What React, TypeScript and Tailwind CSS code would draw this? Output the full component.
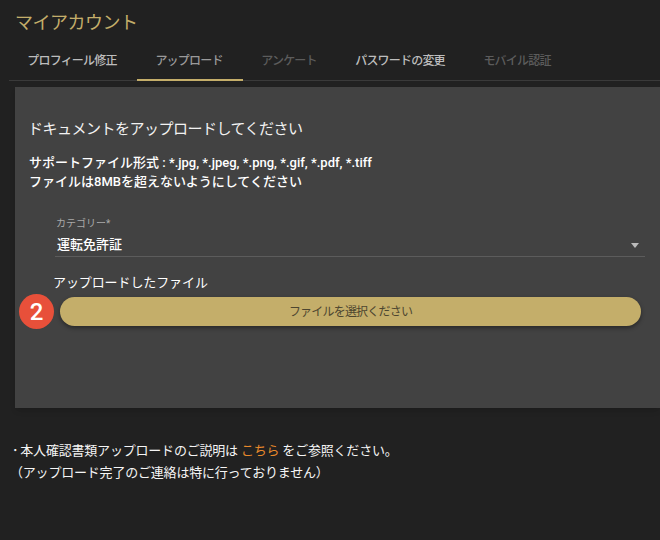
const jp = "font-['Roboto','Noto_Sans_CJK_JP',sans-serif]";

const tabs = [
  { label: "プロフィール修正", className: "w-[128px] text-[#bdbdbd] border-transparent" },
  { label: "アップロード", className: "w-[106px] text-[#9a9a9a] border-[#c4ae6a]" },
  { label: "アンケート", className: "w-[94px] text-[#5c5c5c] border-transparent" },
  { label: "パスワードの変更", className: "w-[128px] text-[#bdbdbd] border-transparent" },
  { label: "モバイル認証", className: "w-[106px] text-[#5c5c5c] border-transparent" },
];

export default function App() {
  return (
    <div className={`${jp} h-[540px] w-[660px] overflow-hidden bg-[#212121] text-white`}>
      <h1 className="pl-[15px] pt-[10px] text-[18px] leading-[25px] tracking-[-0.5px] text-[#c4ae6a]">マイアカウント</h1>

      <div className="ml-[9px] mt-[5px] flex h-[41px] border-b border-[#3a3a3a]">
        {tabs.map((t) => (
          <div key={t.label} className={`${t.className} -mb-px flex h-[41px] items-center justify-center border-b-2 pr-[2px] pt-[2px] text-[12px] font-medium tracking-[-0.8px]`}>
            {t.label}
          </div>
        ))}
      </div>

      <div className="ml-[15px] mt-[6px] h-[321px] bg-[#424242] pl-[14px] pt-[31px] shadow-md">
        <h2 className="-ml-px text-[15px] leading-[22px] tracking-[-0.5px] text-[#f2f2f2]">ドキュメントをアップロードしてください</h2>
        <div className="mt-[13px] text-[13px] font-medium leading-[19px]">
          <p>サポートファイル形式 : *.jpg, *.jpeg, *.png, *.gif, *.pdf, *.tiff</p>
          <p>ファイルは8MBを超えないようにしてください</p>
        </div>

        <div className="ml-[26px] mr-[15px] mt-[26px] border-b border-[#5c5c5c] pb-[1px]">
          <div className="ml-px text-[10px] leading-[14px] text-[#aaaaaa]">カテゴリー*</div>
          <div className="relative ml-[2px] mt-[4px] text-[13px] font-medium leading-[20px]">
            運転免許証
            <span className="absolute right-[6px] top-[8px] h-0 w-0 border-x-[4px] border-t-[5px] border-x-transparent border-t-[#bbbbbb]" />
          </div>
        </div>

        <div className="ml-[24px] mt-[16px] text-[13px] leading-[20px] tracking-[-0.1px]">アップロードしたファイル</div>

        <div className="relative ml-[31px] mr-[19px] mt-[4px]">
          <span className="absolute left-[-41px] top-[-3px] flex h-[35px] w-[35px] items-center justify-center rounded-full bg-[#e8503a] text-[24px] font-medium text-white">2</span>
          <button type="button" className="flex h-[29px] w-full items-center justify-center rounded-full bg-[#c4ae6a] text-[12px] tracking-[-0.8px] text-[#4d4630] shadow-[0_2px_4px_rgba(0,0,0,0.4)]">
            ファイルを選択ください
          </button>
        </div>
      </div>

      <div className="mt-[32px] pl-[10px] text-[13px] leading-[22px] tracking-[-0.2px] text-[#f5f5f5]">
        <p className="pl-[2px]"><span className="mr-[2px]">･</span>本人確認書類アップロードのご説明は <span className="text-[#e8892b]">こちら</span> をご参照ください。</p>
        <p>（アップロード完了のご連絡は特に行っておりません）</p>
      </div>
    </div>
  );
}
